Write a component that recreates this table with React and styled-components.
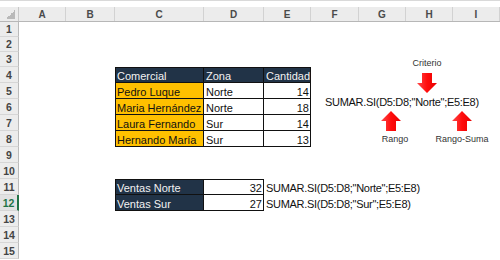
import React from "react"
import styled, { createGlobalStyle } from "styled-components"

const GlobalStyle = createGlobalStyle`
  html, body {
    margin: 0;
    padding: 0;
    background: #fff;
  }
  body {
    font-family: "Liberation Sans", Arial, sans-serif;
  }
`

const NAVY = "#213347"
const AMBER = "#ffc000"
const FORMULA_NORTE = 'SUMAR.SI(D5:D8;"Norte";E5:E8)'
const FORMULA_SUR = 'SUMAR.SI(D5:D8;"Sur";E5:E8)'

const COLUMNS = [
  { key: "A", width: 47 },
  { key: "B", width: 49 },
  { key: "C", width: 89 },
  { key: "D", width: 60 },
  { key: "E", width: 47 },
  { key: "F", width: 48 },
  { key: "G", width: 47 },
  { key: "H", width: 47 },
  { key: "I", width: 47 },
]

// cells by row number, only the filled ones
const CELLS = {
  4: {
    C: { text: "Comercial", kind: "head", edgeTop: true, edgeLeft: true },
    D: { text: "Zona", kind: "head", edgeTop: true },
    E: { text: "Cantidad", kind: "head", edgeTop: true },
  },
  5: {
    C: { text: "Pedro Luque", kind: "name", edgeLeft: true },
    D: { text: "Norte", kind: "plain" },
    E: { text: "14", kind: "plain", right: true },
  },
  6: {
    C: { text: "Maria Hernández", kind: "name", edgeLeft: true },
    D: { text: "Norte", kind: "plain" },
    E: { text: "18", kind: "plain", right: true },
  },
  7: {
    C: { text: "Laura Fernando", kind: "name", edgeLeft: true },
    D: { text: "Sur", kind: "plain" },
    E: { text: "14", kind: "plain", right: true },
  },
  8: {
    C: { text: "Hernando María", kind: "name", edgeLeft: true },
    D: { text: "Sur", kind: "plain" },
    E: { text: "13", kind: "plain", right: true },
  },
  11: {
    C: { text: "Ventas Norte", kind: "head", edgeTop: true, edgeLeft: true },
    D: { text: "32", kind: "plain", right: true, edgeTop: true },
    E: { text: FORMULA_NORTE, tight: true },
  },
  12: {
    C: { text: "Ventas Sur", kind: "head", edgeLeft: true },
    D: { text: "27", kind: "plain", right: true },
    E: { text: FORMULA_SUR, tight: true },
  },
}

const ROWS = Array.from({ length: 15 }, (_, i) => i + 1)
const ACTIVE_ROW = 12

const FILLS = {
  head: NAVY,
  name: AMBER,
  plain: "#fff",
}

const cellShadow = ({ $kind, $edgeTop, $edgeLeft }) => {
  if (!$kind) return "none"
  const lines = ["inset -1px -1px 0 #111"]
  if ($edgeTop) lines.push("inset 0 1px 0 #111")
  if ($edgeLeft) lines.push("inset 1px 0 0 #111")
  return lines.join(", ")
}

const Sheet = styled.div`
  position: relative;
  width: 500px;
  height: 260px;
  overflow: hidden;
  background: #fff;
`

const TopStrip = styled.div`
  height: 7px;
  box-sizing: border-box;
  border-top: 1px solid #d9d9d9;
  background: #fff;
`

const HeaderRow = styled.div`
  display: flex;
  height: 15px;
  background: #ececec;
  box-sizing: border-box;
  border-bottom: 1px solid #b7b7b7;
`

const Corner = styled.div`
  flex: none;
  width: 19px;
  box-sizing: border-box;
  border-right: 1px solid #c8c8c8;
  background: linear-gradient(to top left, #b9b9b9 50%, transparent 50%)
    no-repeat right 3px bottom 2px / 9px 9px;
`

const ColHead = styled.div`
  flex: none;
  width: ${p => p.$width}px;
  box-sizing: border-box;
  border-right: 1px solid #d2d2d2;
  display: flex;
  align-items: center;
  justify-content: center;
  font-size: 10px;
  font-weight: bold;
  color: #4a4a4a;
`

const Row = styled.div`
  display: flex;
  height: ${p => p.$height}px;
`

const RowHead = styled.div`
  flex: none;
  width: 19px;
  box-sizing: border-box;
  background: ${p => (p.$active ? "#e2e2e2" : "#ececec")};
  border-right: ${p => (p.$active ? "2px solid #217346" : "1px solid #bababa")};
  border-bottom: 1px solid #d6d6d6;
  display: flex;
  align-items: center;
  justify-content: center;
  font-size: 10.5px;
  font-weight: bold;
  color: ${p => (p.$active ? "#217346" : "#444")};
`

const Cell = styled.div`
  flex: none;
  width: ${p => p.$width}px;
  box-sizing: border-box;
  display: flex;
  align-items: flex-end;
  justify-content: ${p => (p.$right ? "flex-end" : "flex-start")};
  padding: 0 2px;
  white-space: nowrap;
  font-size: 11px;
  line-height: 14px;
  letter-spacing: ${p => (p.$tight ? "-0.3px" : "0")};
  color: ${p => (p.$kind === "head" ? "#f2f2f2" : "#111")};
  background: ${p => FILLS[p.$kind] || "transparent"};
  box-shadow: ${cellShadow};
`

// floating text box with its arrows, anchored over columns F..I
const Callout = styled.div`
  position: absolute;
  left: 325px;
  top: 58px;
  width: 170px;
  display: flex;
  flex-direction: column;
  gap: 2px;
  pointer-events: none;
`

const MarkerRow = styled.div`
  display: flex;
  padding-left: ${p => p.$indent}px;
  gap: ${p => p.$gap || 0}px;
`

const Marker = styled.div`
  width: ${p => p.$width}px;
  display: flex;
  flex-direction: column;
  align-items: center;
  gap: ${p => p.$gap}px;
`

const Label = styled.span`
  font-size: 9px;
  line-height: 11px;
  color: #333;
  white-space: nowrap;
`

const Formula = styled.span`
  font-size: 11px;
  line-height: 14px;
  letter-spacing: -0.3px;
  color: #111;
  white-space: nowrap;
`

const Arrow = ({ dir, id, shift = 0 }) => (
  <svg
    width="20"
    height="20"
    viewBox="0 0 20 20"
    style={{ marginLeft: shift }}
  >
    <defs>
      <linearGradient id={id} x1="0" y1="0" x2="1" y2="0">
        <stop offset="0" stopColor="#ff4a4a" />
        <stop offset="0.5" stopColor="#ff0d0d" />
        <stop offset="1" stopColor="#e80000" />
      </linearGradient>
    </defs>
    {dir === "down" ? (
      <polygon points="5,0 15,0 15,10 20,10 10,20 0,10 5,10" fill={`url(#${id})`} />
    ) : (
      <polygon points="10,0 20,10 15,10 15,20 5,20 5,10 0,10" fill={`url(#${id})`} />
    )}
  </svg>
)

const App = () => (
  <>
    <GlobalStyle />
    <Sheet>
      <TopStrip />
      <HeaderRow>
        <Corner />
        {COLUMNS.map(col => (
          <ColHead key={col.key} $width={col.width}>
            {col.key}
          </ColHead>
        ))}
      </HeaderRow>
      {ROWS.map(n => {
        const cells = CELLS[n] || {}
        return (
          <Row key={n} $height={n <= 3 ? 15 : 16}>
            <RowHead $active={n === ACTIVE_ROW}>{n}</RowHead>
            {COLUMNS.map(col => {
              const c = cells[col.key]
              return (
                <Cell
                  key={col.key}
                  $width={col.width}
                  $kind={c?.kind}
                  $right={c?.right}
                  $tight={c?.tight}
                  $edgeTop={c?.edgeTop}
                  $edgeLeft={c?.edgeLeft}
                >
                  {c?.text}
                </Cell>
              )
            })}
          </Row>
        )
      })}
      <Callout>
        <MarkerRow $indent={82}>
          <Marker $width={40} $gap={4}>
            <Label>Criterio</Label>
            <Arrow id="arrowCriterio" dir="down" />
          </Marker>
        </MarkerRow>
        <Formula>{FORMULA_NORTE}</Formula>
        <MarkerRow $indent={50} $gap={17}>
          <Marker $width={40} $gap={3}>
            <Arrow id="arrowRango" dir="up" shift={-8} />
            <Label>Rango</Label>
          </Marker>
          <Marker $width={60} $gap={3}>
            <Arrow id="arrowSuma" dir="up" />
            <Label>Rango-Suma</Label>
          </Marker>
        </MarkerRow>
      </Callout>
    </Sheet>
  </>
)

export default App
